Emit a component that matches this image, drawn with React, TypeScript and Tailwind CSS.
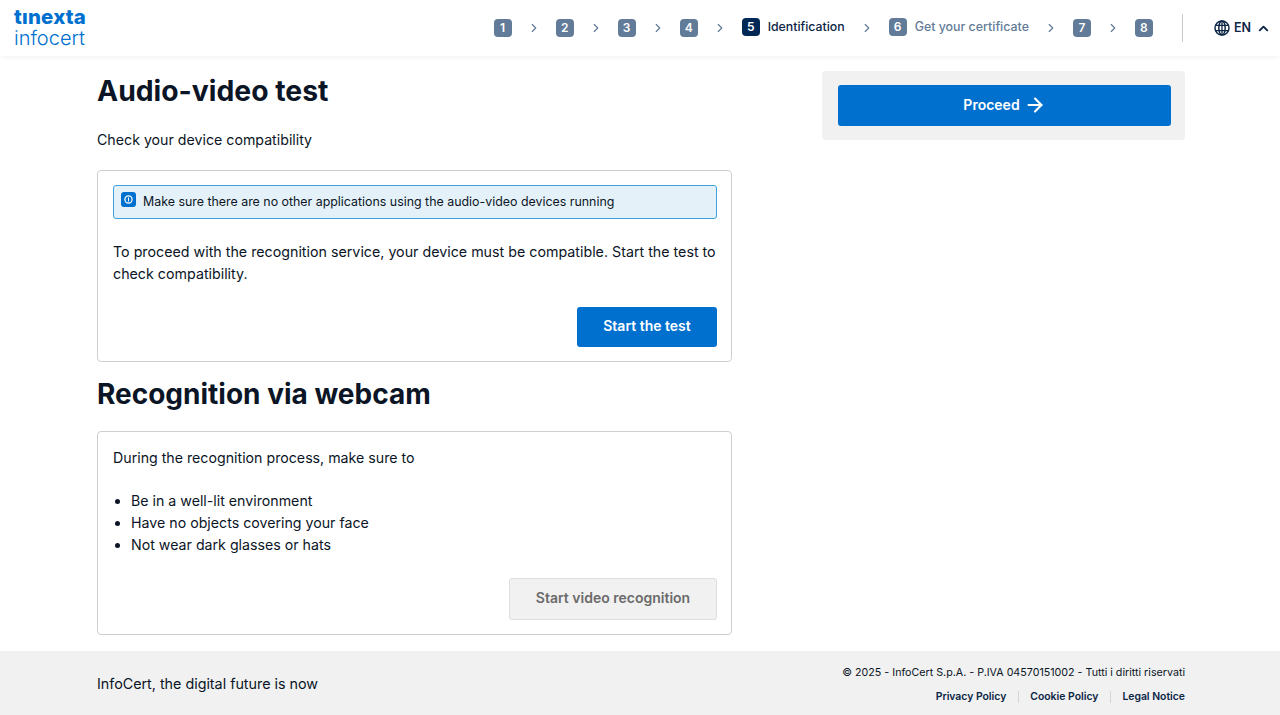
import { ArrowRight, ChevronRight, ChevronUp } from 'lucide-react'

const font = { fontFamily: 'Inter, "Noto Sans", sans-serif' }

function Step({ n, label, active }: { n: number; label?: string; active?: boolean }) {
  return (
    <div className={`flex items-center gap-[8px] ${label ? 'mb-[2px]' : ''}`}>
      <span
        className={`flex h-[18px] w-[18px] items-center justify-center rounded-[4px] text-[12px] font-semibold text-white ${
          active ? 'bg-[#002855]' : 'bg-[#627b98]'
        }`}
      >
        {n}
      </span>
      {label && (
        <span className={`font-medium ${active ? 'text-[12.3px] text-[#0b2545]' : 'text-[12.4px] text-[#627b98]'}`}>
          {label}
        </span>
      )}
    </div>
  )
}

function Sep() {
  return <ChevronRight className="h-[14px] w-[14px] text-[#627b98]" strokeWidth={2} />
}

function GlobeIcon() {
  return (
    <svg viewBox="0 0 24 24" className="h-[16px] w-[16px]" fill="none" stroke="currentColor" strokeWidth={2.2}>
      <circle cx="12" cy="12" r="10.5" />
      <ellipse cx="12" cy="12" rx="4.8" ry="10.5" />
      <path d="M12 1.5v21M2.6 8h18.8M2.6 16h18.8" strokeWidth={1.9} />
    </svg>
  )
}

function InfoIcon() {
  return (
    <span className="flex h-[15px] w-[15px] shrink-0 items-center justify-center rounded-[3px] bg-[#0070cf]">
      <svg viewBox="0 0 10 10" className="h-[9px] w-[9px]" fill="none" stroke="white">
        <circle cx="5" cy="5" r="4" strokeWidth={1.4} />
        <path d="M5 2.8v4.4" strokeWidth={1.2} />
      </svg>
    </span>
  )
}

export default function App() {
  return (
    <div style={font} className="flex h-[715px] w-[1280px] flex-col overflow-hidden bg-white text-[#0b1526]">
      <header className="flex h-[56px] shrink-0 items-center justify-between pl-[14px] pr-[9px] shadow-[0_1px_6px_rgba(0,0,0,0.06)]">
        <div className="flex flex-col text-[#0070cf]">
          <span className="text-[20.4px] font-extrabold leading-[16px] tracking-[0.2px]">tınexta</span>
          <span className="mt-[3px] text-[20px] font-light leading-[20px]">infocert</span>
        </div>
        <div className="flex items-center">
          <nav className="flex items-center gap-[15px]">
            <Step n={1} />
            <Sep />
            <Step n={2} />
            <Sep />
            <Step n={3} />
            <Sep />
            <Step n={4} />
            <Sep />
            <Step n={5} label="Identification" active />
            <Sep />
            <Step n={6} label="Get your certificate" />
            <Sep />
            <Step n={7} />
            <Sep />
            <Step n={8} />
          </nav>
          <div className="ml-[29px] h-[28px] w-px bg-[#c9c9c9]" />
          <div className="ml-[31px] flex items-center gap-[4px] text-[#0b2545]">
            <GlobeIcon />
            <span className="text-[12.5px] font-semibold">EN</span>
            <ChevronUp className="ml-[1px] h-[15px] w-[15px]" strokeWidth={3} />
          </div>
        </div>
      </header>

      <main className="ml-[97px] flex w-[1088px] flex-1 justify-between">
        <div className="w-[635px]">
          <h1 className="mt-[17px] text-[28.3px] font-bold leading-[36px]">Audio-video test</h1>
          <p className="mt-[20px] text-[14.2px] leading-[22px]">Check your device compatibility</p>
          <section className="mt-[19px] h-[192px] rounded-[4px] border border-[#cfcfcf] pl-[15px] pr-[14px] pt-[14px]">
            <div className="flex h-[34px] gap-[7px] rounded-[3px] border border-[#3fa2de] bg-[#e5f1f9] px-[7px] pt-[6px]">
              <InfoIcon />
              <span className="pt-[1px] text-[12.4px] leading-[18px]">
                Make sure there are no other applications using the audio-video devices running
              </span>
            </div>
            <p className="mt-[22px] text-[14.25px] leading-[22px]">
              To proceed with the recognition service, your device must be compatible. Start the test to check
              compatibility.
            </p>
            <div className="mt-[22px] flex justify-end">
              <button className="h-[40px] w-[140px] rounded-[3px] bg-[#0070cf] pb-[4px] text-[14px] font-semibold text-white">
                Start the test
              </button>
            </div>
          </section>
          <h2 className="mt-[14px] text-[28px] font-bold leading-[36px]">Recognition via webcam</h2>
          <section className="mt-[19px] h-[204px] rounded-[4px] border border-[#cfcfcf] pl-[15px] pr-[14px] pt-[15px]">
            <p className="text-[14.2px] leading-[22px]">During the recognition process, make sure to</p>
            <ul className="mt-[21px] list-disc pl-[18px] text-[14.2px] leading-[22px]">
              <li>Be in a well-lit environment</li>
              <li>Have no objects covering your face</li>
              <li>Not wear dark glasses or hats</li>
            </ul>
            <div className="mt-[22px] flex justify-end">
              <button className="h-[42px] w-[208px] rounded-[3px] border border-[#dedede] bg-[#f1f1f1] pb-[4px] text-[14px] font-semibold text-[#6b6b6b]">
                Start video recognition
              </button>
            </div>
          </section>
        </div>
        <aside className="mt-[15px] h-[69px] w-[363px] rounded-[4px] bg-[#f1f1f1] pl-[16px] pr-[14px] pt-[14px]">
          <button className="flex h-[41px] w-full items-center justify-center gap-[4px] rounded-[3px] bg-[#0070cf] pb-[2px] text-[14px] font-semibold text-white">
            Proceed
            <ArrowRight className="h-[22px] w-[22px]" strokeWidth={2.4} />
          </button>
        </aside>
      </main>

      <footer className="h-[64px] shrink-0 bg-[#f1f1f1]">
        <div className="ml-[97px] flex h-full w-[1088px] items-center justify-between">
          <span className="mt-[2px] text-[14.3px]">InfoCert, the digital future is now</span>
          <div className="mt-[4px] flex flex-col items-end gap-[8px]">
            <span className="text-[10.7px] leading-[16px]">© 2025 - InfoCert S.p.A. - P.IVA 04570151002 - Tutti i diritti riservati</span>
            <div className="flex items-center text-[10.4px] font-semibold leading-[16px] text-[#0b2545]">
              <span>Privacy Policy</span>
              <span className="mx-[11.5px] h-[12px] w-px bg-[#d5d5d5]" />
              <span>Cookie Policy</span>
              <span className="mx-[11.5px] h-[12px] w-px bg-[#d5d5d5]" />
              <span>Legal Notice</span>
            </div>
          </div>
        </div>
      </footer>
    </div>
  )
}
